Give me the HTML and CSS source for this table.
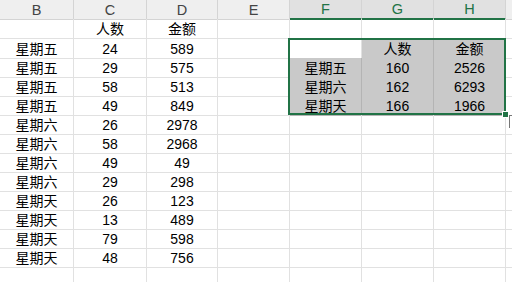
FILE: index.html
```html
<!DOCTYPE html>
<html lang="zh-CN">
<head>
    <meta charset="UTF-8">
    <meta name="viewport" content="width=device-width, initial-scale=1.0">
    <title>星期汇总</title>
    <link rel="stylesheet" href="styles.css">
</head>
<body>
    <div class="sheet">
        <div class="row head">
            <div class="cell hd">B</div>
            <div class="cell hd">C</div>
            <div class="cell hd">D</div>
            <div class="cell hd">E</div>
            <div class="cell hd sel">F</div>
            <div class="cell hd sel">G</div>
            <div class="cell hd sel">H</div>
            <div class="cell hd"></div>
        </div>
        <div class="row first">
            <div class="cell"></div>
            <div class="cell">人数</div>
            <div class="cell">金额</div>
            <div class="cell"></div>
            <div class="cell"></div>
            <div class="cell"></div>
            <div class="cell"></div>
            <div class="cell"></div>
        </div>
        <div class="row">
            <div class="cell">星期五</div>
            <div class="cell">24</div>
            <div class="cell">589</div>
            <div class="cell"></div>
            <div class="cell"></div>
            <div class="cell pv">人数</div>
            <div class="cell pv">金额</div>
            <div class="cell"></div>
        </div>
        <div class="row">
            <div class="cell">星期五</div>
            <div class="cell">29</div>
            <div class="cell">575</div>
            <div class="cell"></div>
            <div class="cell pv">星期五</div>
            <div class="cell pv">160</div>
            <div class="cell pv">2526</div>
            <div class="cell"></div>
        </div>
        <div class="row">
            <div class="cell">星期五</div>
            <div class="cell">58</div>
            <div class="cell">513</div>
            <div class="cell"></div>
            <div class="cell pv">星期六</div>
            <div class="cell pv">162</div>
            <div class="cell pv">6293</div>
            <div class="cell"></div>
        </div>
        <div class="row">
            <div class="cell">星期五</div>
            <div class="cell">49</div>
            <div class="cell">849</div>
            <div class="cell"></div>
            <div class="cell pv">星期天</div>
            <div class="cell pv">166</div>
            <div class="cell pv">1966</div>
            <div class="cell"></div>
        </div>
        <div class="row">
            <div class="cell">星期六</div>
            <div class="cell">26</div>
            <div class="cell">2978</div>
            <div class="cell"></div>
            <div class="cell"></div>
            <div class="cell"></div>
            <div class="cell"></div>
            <div class="cell"></div>
        </div>
        <div class="row">
            <div class="cell">星期六</div>
            <div class="cell">58</div>
            <div class="cell">2968</div>
            <div class="cell"></div>
            <div class="cell"></div>
            <div class="cell"></div>
            <div class="cell"></div>
            <div class="cell"></div>
        </div>
        <div class="row">
            <div class="cell">星期六</div>
            <div class="cell">49</div>
            <div class="cell">49</div>
            <div class="cell"></div>
            <div class="cell"></div>
            <div class="cell"></div>
            <div class="cell"></div>
            <div class="cell"></div>
        </div>
        <div class="row">
            <div class="cell">星期六</div>
            <div class="cell">29</div>
            <div class="cell">298</div>
            <div class="cell"></div>
            <div class="cell"></div>
            <div class="cell"></div>
            <div class="cell"></div>
            <div class="cell"></div>
        </div>
        <div class="row">
            <div class="cell">星期天</div>
            <div class="cell">26</div>
            <div class="cell">123</div>
            <div class="cell"></div>
            <div class="cell"></div>
            <div class="cell"></div>
            <div class="cell"></div>
            <div class="cell"></div>
        </div>
        <div class="row">
            <div class="cell">星期天</div>
            <div class="cell">13</div>
            <div class="cell">489</div>
            <div class="cell"></div>
            <div class="cell"></div>
            <div class="cell"></div>
            <div class="cell"></div>
            <div class="cell"></div>
        </div>
        <div class="row">
            <div class="cell">星期天</div>
            <div class="cell">79</div>
            <div class="cell">598</div>
            <div class="cell"></div>
            <div class="cell"></div>
            <div class="cell"></div>
            <div class="cell"></div>
            <div class="cell"></div>
        </div>
        <div class="row">
            <div class="cell">星期天</div>
            <div class="cell">48</div>
            <div class="cell">756</div>
            <div class="cell"></div>
            <div class="cell"></div>
            <div class="cell"></div>
            <div class="cell"></div>
            <div class="cell"></div>
        </div>
        <div class="row">
            <div class="cell"></div>
            <div class="cell"></div>
            <div class="cell"></div>
            <div class="cell"></div>
            <div class="cell"></div>
            <div class="cell"></div>
            <div class="cell"></div>
            <div class="cell"></div>
        </div>

        <!-- selected range F2:H5 -->
        <div class="selection"></div>
        <div class="fill-handle"></div>
        <div class="quick-btn"></div>
    </div>
</body>
</html>
```

FILE: styles.css
```css
body {
    margin: 0;
    padding: 0;
    background-color: #fff;
    overflow: hidden;
    font-family: "Liberation Sans", "Noto Sans CJK SC", sans-serif;
}
.sheet {
    position: relative;
    width: 512px;
    height: 282px;
    overflow: hidden;
}
.row {
    display: grid;
    grid-template-columns: 74px 73px 71px 72px 72px 72px 72px 40px;
    height: 19px;
}
.row.first {
    height: 20px;
}
.cell {
    box-sizing: border-box;
    border-right: 1px solid #e1e1e1;
    border-bottom: 1px solid #e1e1e1;
    display: flex;
    align-items: center;
    justify-content: center;
    font-size: 14px;
    line-height: 18px;
    color: #000;
    white-space: nowrap;
    padding-top: 1px;
}
.hd {
    background-color: #efefef;
    border-right-color: #d4d4d4;
    border-bottom-color: #d4d4d4;
    color: #444;
    font-size: 14.5px;
    padding-top: 0;
}
.hd.sel {
    background-color: #e1e1e1;
    color: #217346;
    border-bottom: 2px solid #217346;
}
.pv {
    background-color: #c9c9c9;
    border-right-color: #b4b4b4;
    border-bottom-color: #b4b4b4;
}
.selection {
    position: absolute;
    left: 288px;
    top: 38px;
    width: 218px;
    height: 77px;
    box-sizing: border-box;
    border: 2px solid #217346;
}
.fill-handle {
    position: absolute;
    left: 502px;
    top: 111px;
    width: 5px;
    height: 5px;
    background-color: #217346;
    border: 1px solid #fff;
}
.quick-btn {
    position: absolute;
    left: 509px;
    top: 115px;
    width: 12px;
    height: 12px;
    border-left: 1px solid #777;
    border-top: 1px solid #777;
}
```
